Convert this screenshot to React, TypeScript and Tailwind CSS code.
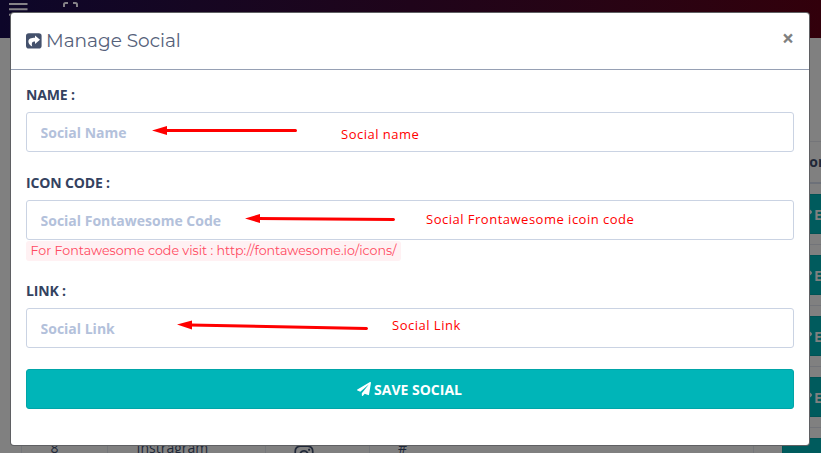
import { FaInstagram, FaPaperPlane, FaPencilAlt } from "react-icons/fa";

const openSans = "font-['Open_Sans','Noto_Sans',sans-serif]";
const heading = "font-['Montserrat','Inter',sans-serif]";

function ShareSquare() {
  return (
    <svg viewBox="0 0 16 16" className="size-[16px] shrink-0" aria-hidden="true">
      <rect x="0" y="0.2" width="15.6" height="15.4" rx="2.8" fill="#44516c" />
      <path
        d="M9 2.400 L14 6.700 L9 11 V8.600 C6.300 8.600 5.300 9.800 6.200 13.400 C3.800 12 2.400 10.300 2.400 8.400 C2.400 5.700 5.100 4.800 9 4.800 Z"
        fill="#fff"
      />
    </svg>
  );
}

function NavBar() {
  return (
    <header className="h-[38px] shrink-0 bg-linear-to-r from-[#0d0629] via-[#1f041a] to-[#32000b]">
      <div className="flex pl-[9px] text-[#858287]">
        <svg width="19" height="20" viewBox="0 0 19 20" stroke="currentColor" strokeWidth="2">
          <path d="M0 4h18.5M0 9.300h18.500M0 14.700h18.500" />
        </svg>
        <svg width="15" height="20" viewBox="0 0 15 20" className="ml-[35px]" fill="none" stroke="currentColor" strokeWidth="2">
          <path d="M1 7V4.500Q1 3 2.500 3H5M10 3h2.500Q14 3 14 4.500V7M1 12v2.500q0 1.500 1.500 1.500H5M10 16h2.500q1.500 0 1.500-1.500V12" />
        </svg>
      </div>
    </header>
  );
}

const rows = [
  { id: 4, name: "Facebook", link: "#" },
  { id: 5, name: "Twitter", link: "#" },
  { id: 6, name: "Linkedin", link: "#" },
  { id: 7, name: "Pinterest", link: "#" },
  { id: 8, name: "Instragram", link: "#" },
];

const columns = "grid w-[900px] grid-cols-[86px_158px_104px_384px_168px]";
const cell = "flex items-start border-l border-[#74767a]";

function SocialTable() {
  return (
    <div className="pt-[103px] pl-[21px] text-[14px] text-[#202838]">
      <div className={`${columns} h-[43px] border-t border-b-2 border-t-[#747579] border-b-[#6d7179] font-bold`}>
        <div className={cell} />
        <div className={cell} />
        <div className={cell} />
        <div className={cell} />
        <div className={`${cell} pt-[9px] pl-[28px]`}>
          <span>Action</span>
        </div>
      </div>
      {rows.map((row) => (
        <div key={row.id} className={`${columns} h-[61px] border-b border-[#727479]`}>
          <div className={`${cell} pt-[9px] pl-[28.5px]`}>{row.id}</div>
          <div className={`${cell} pt-[9px] pl-[28.5px]`}>{row.name}</div>
          <div className={`${cell} pt-[16px] pl-[27px]`}>
            <FaInstagram size={22} />
          </div>
          <div className={`${cell} pt-[9px] pl-[28px]`}>{row.link}</div>
          <div className={`${cell} pt-[10px] pl-[28px]`}>
            <button className="flex h-[40px] w-[88px] items-center gap-[2px] border border-[#005355] bg-[#005b5d] pl-[15px] font-bold text-[#808080]">
              <FaPencilAlt size={14} className="mt-[4px] shrink-0" />
              EDIT
            </button>
          </div>
        </div>
      ))}
    </div>
  );
}

function Field({ label, placeholder }: { label: string; placeholder: string }) {
  return (
    <label className="block">
      <span className="block h-[24px] text-[14px] leading-[14px] font-bold tracking-[-0.15px] text-[#34425f]">{label}</span>
      <input
        className="block h-[40px] w-full rounded-[3px] border border-[#cad3e3] bg-white px-[13.5px] text-[14px] font-bold outline-none placeholder:text-[#b3c1db] placeholder:opacity-100"
        placeholder={placeholder}
      />
    </label>
  );
}

function Annotations() {
  return (
    <div className="pointer-events-none absolute inset-0 font-['Open_Sans','Noto_Sans',sans-serif] text-[13px] leading-[16px] whitespace-nowrap text-[#f00]">
      <svg width="821" height="453" viewBox="0 0 821 453" className="absolute inset-0" stroke="#f00" strokeWidth="3" strokeLinecap="round" fill="#f00">
        <path d="M164 130.500H295.500M257 218.500L393.500 219.500M190 325L366.500 328.500" />
        <path stroke="none" d="M152 130.500l15-4.500v9zM245 218.500l15-4.500v9zM177 324.500l15-4v9z" />
      </svg>
      <span className="absolute top-[126px] left-[341px] tracking-[0.5px]">Social name</span>
      <span className="absolute top-[211px] left-[426px] tracking-[0.5px]">Social Frontawesome icoin code</span>
      <span className="absolute top-[317px] left-[392px] tracking-[0.5px]">Social Link</span>
    </div>
  );
}

export default function App() {
  return (
    <div className={`relative h-[453px] w-[821px] overflow-hidden bg-[#808080] ${openSans}`}>
      <div className="flex h-full flex-col">
        <NavBar />
        <SocialTable />
      </div>

      <div className="absolute top-[13px] left-[11px] h-[432px] w-[798px] rounded-[3px] bg-white shadow-[0_0_0_1px_#5f6063]">
        <div className="flex h-[57px] items-center border-b border-[#96a0b4] px-[15px]">
          <ShareSquare />
          <h4 className={`ml-[4px] text-[18.5px] leading-none font-normal text-[#55617a] ${heading}`}>Manage Social</h4>
          <button className="mb-[5px] ml-auto text-[21px] leading-none font-bold text-[#808080]">×</button>
        </div>
        <div className="px-[15px] pt-[18px]">
          <Field label="NAME :" placeholder="Social Name" />
          <div className="h-[24px]" />
          <Field label="ICON CODE :" placeholder="Social Fontawesome Code" />
          <div className="mt-px flex h-[20px]">
            <code className={`flex h-[20px] w-[375px] items-center rounded-[3px] bg-[#fff1f3] pl-[4.5px] text-[12.63px] whitespace-nowrap text-[#ff4961] ${heading}`}>
              For Fontawesome code visit : http://fontawesome.io/icons/
            </code>
          </div>
          <div className="h-[23px]" />
          <Field label="LINK :" placeholder="Social Link" />
          <button className="mt-[21px] flex h-[40px] w-full items-center justify-center gap-[3px] rounded-[3px] border border-[#00a5a8] bg-[#00b5b8] pr-px text-[14px] font-bold text-white">
            <FaPaperPlane size={14} />
            <span>SAVE SOCIAL</span>
          </button>
        </div>
      </div>

      <Annotations />
    </div>
  );
}
